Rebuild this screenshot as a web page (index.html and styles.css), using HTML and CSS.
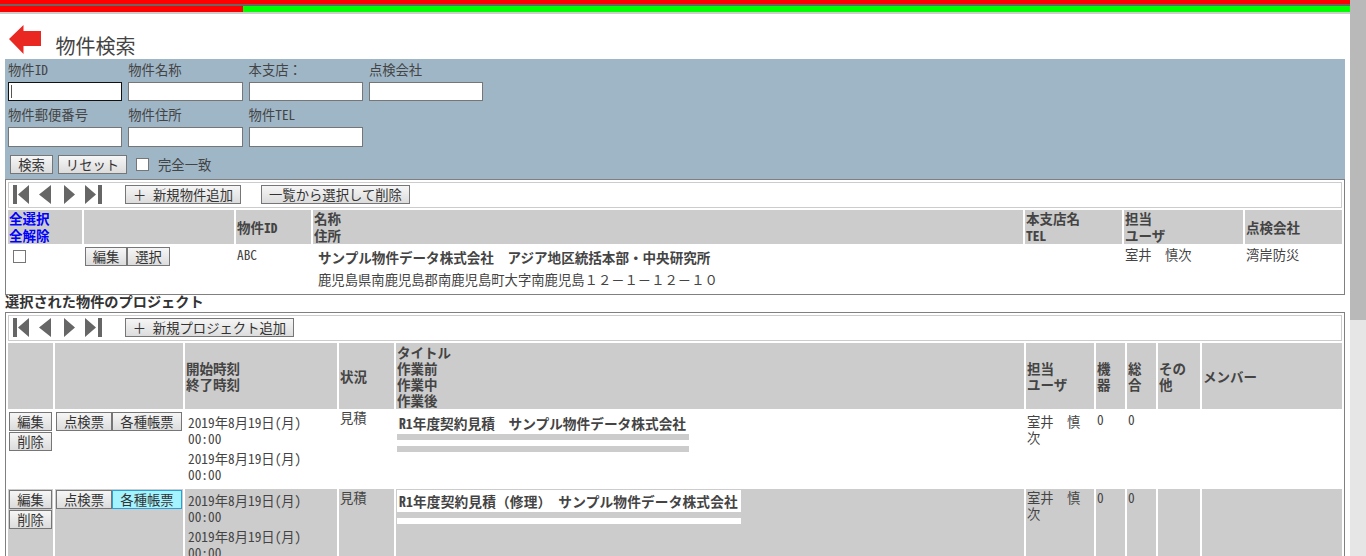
FILE: index.html
```html
<!DOCTYPE html>
<html lang="ja">
<head>
<meta charset="utf-8">
<title>物件検索</title>
<link rel="stylesheet" href="styles.css">
</head>
<body>
<div class="app">
  <div class="page">
    <div class="bar-top"></div>
    <div class="bar-gap"></div>
    <div class="bar-progress"><div class="bar-done"></div></div>
    <div class="bar-end"></div>
    <header class="title-row">
      <svg class="back" width="32" height="29" viewBox="0 0 32 29"><path d="M0 14 14.500 0v6H32v15H14.500v8z" fill="#e92822"/></svg>
      <h1>物件検索</h1>
    </header>
    <form class="search">
      <div class="field-grid">
        <label class="field"><span>物件<b class="hw">ID</b></span><input class="focus" type="text"></label>
        <label class="field"><span>物件名称</span><input type="text"></label>
        <label class="field"><span>本支店：</span><input type="text"></label>
        <label class="field"><span>点検会社</span><input type="text"></label>
        <label class="field"><span>物件郵便番号</span><input type="text"></label>
        <label class="field"><span>物件住所</span><input type="text"></label>
        <label class="field"><span>物件<b class="hw">TEL</b></span><input type="text"></label>
      </div>
      <div class="search-actions">
        <button class="btn btn-search" type="button">検索</button>
        <button class="btn btn-reset" type="button">リセット</button>
        <span class="check"></span>
        <span>完全一致</span>
      </div>
    </form>

    <section class="panel">
      <div class="toolbar">
        <svg class="pager" width="90" height="19" viewBox="0 0 90 19"><path d="M0 0h4v19H0zM16 0v19L5 9.500zM38 0v19L26 9.500zM51 0v19l11-9.500zM72 0v19l11-9.500zM85 0h4v19h-4z" fill="#666"/></svg>
        <button class="btn btn-add1" type="button">＋<b class="hw"> </b>新規物件追加</button>
        <button class="btn btn-del" type="button">一覧から選択して削除</button>
      </div>
      <table class="grid grid-a">
        <colgroup><col class="a1"><col class="a2"><col class="a3"><col><col class="a5"><col class="a6"><col class="a7"></colgroup>
        <thead>
          <tr>
            <th><a href="#">全選択<br>全解除</a></th>
            <th></th>
            <th>物件<b class="hw">ID</b></th>
            <th>名称<br>住所</th>
            <th>本支店名<br><b class="hw">TEL</b></th>
            <th>担当<br>ユーザ</th>
            <th>点検会社</th>
          </tr>
        </thead>
        <tbody>
          <tr>
            <td><span class="check check-row"></span></td>
            <td class="btns"><button class="btn btn-mini" type="button">編集</button><button class="btn btn-mini" type="button">選択</button></td>
            <td class="hw">ABC</td>
            <td class="bldg"><strong>サンプル物件データ株式会社　アジア地区統括本部・中央研究所</strong><span>鹿児島県南鹿児島郡南鹿児島町大字南鹿児島１２－１－１２－１０</span></td>
            <td></td>
            <td>室井　慎次</td>
            <td>湾岸防災</td>
          </tr>
        </tbody>
      </table>
    </section>

    <h2>選択された物件のプロジェクト</h2>

    <section class="panel">
      <div class="toolbar">
        <svg class="pager" width="90" height="19" viewBox="0 0 90 19"><path d="M0 0h4v19H0zM16 0v19L5 9.500zM38 0v19L26 9.500zM51 0v19l11-9.500zM72 0v19l11-9.500zM85 0h4v19h-4z" fill="#666"/></svg>
        <button class="btn btn-add2" type="button">＋<b class="hw"> </b>新規プロジェクト追加</button>
      </div>
      <table class="grid grid-b">
        <colgroup><col class="b1"><col class="b2"><col class="b3"><col class="b4"><col><col class="b6"><col class="b7"><col class="b8"><col class="b9"><col class="b10"></colgroup>
        <thead>
          <tr>
            <th></th><th></th>
            <th>開始時刻<br>終了時刻</th>
            <th>状況</th>
            <th>タイトル<br>作業前<br>作業中<br>作業後</th>
            <th>担当<br>ユーザ</th>
            <th>機<br>器</th>
            <th>総<br>合</th>
            <th>その<br>他</th>
            <th>メンバー</th>
          </tr>
        </thead>
        <tbody>
          <tr>
            <td class="stack"><button class="btn btn-row" type="button">編集</button><button class="btn btn-row" type="button">削除</button></td>
            <td class="btns"><button class="btn btn-sheet" type="button">点検票</button><button class="btn btn-sheet" type="button">各種帳票</button></td>
            <td class="times hw"><p>2019年8月19日(月)<br>00:00</p><p>2019年8月19日(月)<br>00:00</p></td>
            <td class="status">見積</td>
            <td class="work"><div class="work-box"><strong><b class="hw">R1</b>年度契約見積　サンプル物件データ株式会社</strong><i></i><i></i><i></i></div></td>
            <td class="user">室井　慎次</td>
            <td class="num hw">0</td>
            <td class="num hw">0</td>
            <td></td>
            <td></td>
          </tr>
          <tr class="alt">
            <td class="stack"><button class="btn btn-row" type="button">編集</button><button class="btn btn-row" type="button">削除</button></td>
            <td class="btns"><button class="btn btn-sheet" type="button">点検票</button><button class="btn btn-sheet btn-on" type="button">各種帳票</button></td>
            <td class="times hw"><p>2019年8月19日(月)<br>00:00</p><p>2019年8月19日(月)<br>00:00</p></td>
            <td class="status">見積</td>
            <td class="work"><div class="work-box"><strong><b class="hw">R1</b>年度契約見積（修理）　サンプル物件データ株式会社</strong><i></i><i></i><i></i></div></td>
            <td class="user">室井　慎次</td>
            <td class="num hw">0</td>
            <td class="num hw">0</td>
            <td></td>
            <td></td>
          </tr>
        </tbody>
      </table>
    </section>
  </div>
  <div class="scrollbar"><div class="thumb"></div></div>
</div>
</body>
</html>
```
FILE: styles.css
```css
* { box-sizing: border-box; }
html, body { height: 100%; margin: 0; overflow: hidden; background: #fff; }
body {
  font: 13.33px/16px "Noto Sans CJK JP", sans-serif;
  color: #444;
}
.hw { font-feature-settings: "hwid" 1; font-weight: inherit; }
.app { display: flex; height: 100%; }
.page { width: 1350px; flex: none; height: 100%; overflow: hidden; }
.scrollbar { width: 16px; flex: none; background: #e6e6e6; }
.thumb { height: 320px; background: #b9b9b9; }

.bar-top { height: 4px; background: #f00; }
.bar-gap { height: 2px; background: #666; }
.bar-progress { height: 6px; background: #0f0; }
.bar-done { width: 243px; height: 100%; background: #f00; }
.bar-end { height: 2px; background: #ccc; }
.title-row { display: flex; align-items: flex-start; height: 45px; padding: 11px 0 0 9px; }
.back { flex: none; }
h1 { margin: 8px 0 0 14.500px; font-size: 20px; line-height: 25px; font-weight: 400; color: #444; }

.search {
  margin: 0 5px;
  height: 120px;
  padding: 3px 3px 0;
  background: #9fb6c7;
}
.field-grid { display: grid; grid-template-columns: repeat(4, 120.3px); row-gap: 6px; }
.field { display: flex; flex-direction: column; gap: 4px; }
.field span { height: 16px; }
input[type=text] {
  width: 114.300px;
  height: 19px;
  padding: 0 1px;
  margin: 0;
  background: #fff;
  border: 1px solid #767676;
  border-radius: 0;
  outline: 0;
}
.field:nth-child(n+5) input { height: 20px; }
input.focus {
  border-color: #111;
  background: linear-gradient(#555, #555) 2px 2px / 1px 13px no-repeat #fff;
}
.search-actions { display: flex; align-items: center; gap: 5px; margin: 8px 0 0 2px; height: 19px; }
.btn {
  height: 19px;
  padding: 0;
  margin: 0;
  font: inherit;
  color: #333;
  background: linear-gradient(#f6f6f6, #dcdcdc);
  border: 1px solid #767676;
  border-radius: 0;
  white-space: nowrap;
}
.btn-search { width: 43px; }
.btn-reset { width: 69px; }
.check { width: 13px; height: 13px; background: #fff; border: 1px solid #767676; display: inline-block; margin: 0 4px; }

.panel { margin: 0 5px; border: 1px solid #808080; padding: 2px 2px 1px; }
.toolbar {
  display: flex;
  align-items: flex-start;
  height: 26px;
  padding: 2px 0 0 4px;
  border: 1px solid #ccc;
}
.pager { flex: none; }
.btn-add1 { width: 116px; margin-left: 22px; }
.btn-del { width: 149px; margin-left: 20px; }
.btn-add2 { width: 169px; margin-left: 22px; }

.grid {
  width: calc(100% + 4px);
  margin: 0 -2px;
  border-collapse: separate;
  border-spacing: 2px;
  table-layout: fixed;
}
.grid th {
  background: #ccc;
  padding: 0 1px;
  text-align: left;
  font-size: 13.5px;
  font-weight: 700;
  color: #444;
  vertical-align: middle;
}
.grid td { padding: 1px; vertical-align: top; }
.grid a { color: #00f; text-decoration: none; font-weight: 700; }

.a1 { width: 74px; } .a2 { width: 150px; } .a3 { width: 75px; } .a5 { width: 97px; } .a6 { width: 119px; } .a7 { width: 97px; }
.grid-a th { height: 34px; line-height: 17px; }
.grid-a td { height: 45px; }
.check-row { margin: 3px 0 0 4px; }
.btns { font-size: 0; }
.btns .btn { font-size: 13.33px; }
.btn-mini { width: 42px; }
.btn-mini + .btn-mini { width: 43px; }
.grid .bldg { padding: 3px 0 0 5px; }
.bldg strong { display: block; font-size: 13.57px; font-weight: 700; white-space: nowrap; }
.bldg span { display: block; padding-top: 7px; white-space: nowrap; }

h2 { margin: 0; height: 17px; padding-left: 5px; font-size: 14.2px; line-height: 13px; font-weight: 700; color: #333; }

.b1 { width: 45px; } .b2 { width: 128px; } .b3 { width: 152px; } .b4 { width: 55px; } .b6 { width: 68px; } .b7 { width: 29px; } .b8 { width: 29px; } .b9 { width: 42px; } .b10 { width: 140px; }
.grid-b th { height: 66px; }
.grid-b td { height: 76px; }
.stack .btn-row { display: block; width: 43px; }
.stack .btn-row + .btn-row { margin-top: 1px; }
.btn-sheet { width: 56px; }
.btn-sheet + .btn-sheet { width: 70px; }
.btn-on { background: #a4f3ff; border-color: #2a9fd8; }
.grid .times { padding: 4px 0 0 3px; }
.times p { margin: 0 0 4px; white-space: nowrap; }
.grid .status { padding: 0 1px; line-height: 14px; }
.grid .alt .status { padding-top: 2px; }
.grid .user { padding-top: 3px; }
.grid .num { padding-top: 1px; }
.grid .alt .user { padding-top: 1px; }
.work-box { display: inline-block; vertical-align: top; }
.work-box strong { display: block; height: 22px; padding: 0 3px 0 2px; line-height: 22px; font-size: 13.7px; background: #fff; font-weight: 700; white-space: nowrap; }
.alt .work-box strong { letter-spacing: .15px; }
.work-box i { display: block; height: 6px; background: #ccc; }
.work-box i:nth-of-type(2) { background: #fff; }
.alt td { background: #ccc; }
```
